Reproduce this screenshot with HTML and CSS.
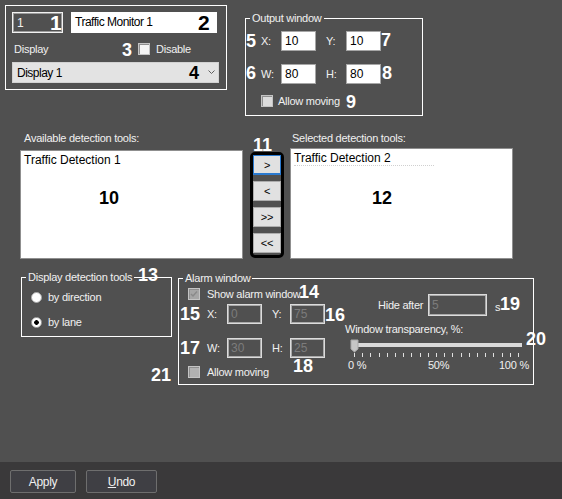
FILE: index.html
```html
<!DOCTYPE html>
<html>
<head>
<meta charset="utf-8">
<link rel="stylesheet" href="styles.css">
</head>
<body>
<div class="window">
  <div class="main">
    <div class="top-row">
      <div class="box general">
        <div class="g-row1">
          <div class="id-field">1</div>
          <div class="name-field">Traffic Monitor 1</div>
        </div>
        <div class="g-row2">
          <span class="display-lbl">Display</span>
          <span class="check light"></span>
          <span class="chk-text">Disable</span>
        </div>
        <div class="combo">
          <span>Display 1</span>
          <svg class="chev" width="7" height="5" viewBox="0 0 7 5"><polyline points="0.5,0.5 3.5,3.5 6.5,0.5" fill="none" stroke="#606060" stroke-width="1"/></svg>
        </div>
      </div>
      <fieldset class="group output">
        <legend>Output window</legend>
        <div class="coord-grid r1">
          <span>X:</span><span class="input">10</span><span></span><span>Y:</span><span class="input">10</span>
        </div>
        <div class="coord-grid r2">
          <span>W:</span><span class="input">80</span><span></span><span>H:</span><span class="input">80</span>
        </div>
        <div class="chk-row">
          <span class="check grey"></span><span>Allow moving</span>
        </div>
      </fieldset>
    </div>

    <div class="lists-row">
      <div class="list-col left">
        <div class="list-label">Available detection tools:</div>
        <div class="listbox"><div class="item">Traffic Detection 1</div></div>
      </div>
      <div class="btn-group">
        <div class="arrow-btn focus">&gt;</div>
        <div class="arrow-btn">&lt;</div>
        <div class="arrow-btn">&gt;&gt;</div>
        <div class="arrow-btn">&lt;&lt;</div>
      </div>
      <div class="list-col right">
        <div class="list-label">Selected detection tools:</div>
        <div class="listbox"><div class="item sel">Traffic Detection 2</div></div>
      </div>
    </div>

    <div class="bottom-row">
      <fieldset class="group detect">
        <legend>Display detection tools</legend>
        <div class="radio-row first"><span class="radio"></span><span>by direction</span></div>
        <div class="radio-row second"><span class="radio on"></span><span>by lane</span></div>
      </fieldset>
      <fieldset class="group alarm">
        <legend>Alarm window</legend>
        <div class="alarm-body">
          <div class="alarm-left">
            <div class="chk-row a1">
              <span class="check dis-checked"><svg width="10" height="10" viewBox="0 0 10 10"><polyline points="2,5 4,7 8,2.5" fill="none" stroke="#8a8a8a" stroke-width="1.5"/></svg></span><span>Show alarm window</span>
            </div>
            <div class="coord-grid a2">
              <span>X:</span><span class="input dis">0</span><span></span><span>Y:</span><span class="input dis">75</span>
            </div>
            <div class="coord-grid a3">
              <span>W:</span><span class="input dis">30</span><span></span><span>H:</span><span class="input dis">25</span>
            </div>
            <div class="chk-row a4">
              <span class="check dis"></span><span>Allow moving</span>
            </div>
          </div>
          <div class="alarm-right">
            <div class="hide-row">
              <span class="hide-lbl">Hide after</span><span class="input dis hide-input">5</span><span class="sec">s</span>
            </div>
            <div class="trans-lbl">Window transparency, %:</div>
            <svg class="slider" width="185" height="22" viewBox="0 0 185 22">
              <rect x="8" y="7" width="169" height="4" fill="#dadada"/>
              <g fill="#e0e0e0">
                <rect x="9" y="17" width="1" height="4"/><rect x="17" y="17" width="1" height="4"/><rect x="25" y="17" width="1" height="4"/>
                <rect x="34" y="17" width="1" height="4"/><rect x="42" y="17" width="1" height="4"/><rect x="50" y="17" width="1" height="4"/>
                <rect x="58" y="17" width="1" height="4"/><rect x="66" y="17" width="1" height="4"/><rect x="75" y="17" width="1" height="4"/>
                <rect x="83" y="17" width="1" height="4"/><rect x="91" y="17" width="1" height="4"/><rect x="99" y="17" width="1" height="4"/>
                <rect x="107" y="17" width="1" height="4"/><rect x="116" y="17" width="1" height="4"/><rect x="124" y="17" width="1" height="4"/>
                <rect x="132" y="17" width="1" height="4"/><rect x="140" y="17" width="1" height="4"/><rect x="148" y="17" width="1" height="4"/>
                <rect x="157" y="17" width="1" height="4"/><rect x="165" y="17" width="1" height="4"/><rect x="173" y="17" width="1" height="4"/>
              </g>
              <polygon points="6,4 13,4 13,13 9.5,16 6,13" fill="#c6c6c6" stroke="#a8a8a8" stroke-width="1"/>
            </svg>
            <div class="slider-labels"><span class="l0">0 %</span><span class="l50">50%</span><span>100 %</span></div>
          </div>
        </div>
      </fieldset>
    </div>
  </div>

  <div class="footer">
    <div class="btn apply">Apply</div>
    <div class="btn undo"><u>U</u>ndo</div>
  </div>

  <span class="num big n1">1</span>
  <span class="num big dark n2">2</span>
  <span class="num n3">3</span>
  <span class="num dark n4">4</span>
  <span class="num n5">5</span>
  <span class="num n6">6</span>
  <span class="num n7">7</span>
  <span class="num n8">8</span>
  <span class="num n9">9</span>
  <span class="num dark n10">10</span>
  <span class="num n11">11</span>
  <span class="num dark n12">12</span>
  <span class="num n13">13</span>
  <span class="num n14">14</span>
  <span class="num n15">15</span>
  <span class="num n16">16</span>
  <span class="num n17">17</span>
  <span class="num n18">18</span>
  <span class="num n19">19</span>
  <span class="num n20">20</span>
  <span class="num n21">21</span>
</div>
</body>
</html>
```

FILE: styles.css
```css
* { box-sizing: border-box; }
html, body { margin: 0; padding: 0; }
body {
  width: 562px;
  height: 499px;
  overflow: hidden;
  background: #505050;
  color: #f0f0f0;
  font-family: "Liberation Sans", Arial, sans-serif;
  font-size: 11px;
  line-height: 14px;
  letter-spacing: -0.25px;
}
.window { position: relative; width: 562px; height: 499px; }
.main { height: 462px; }

/* ---------- top ---------- */
.top-row { display: flex; align-items: flex-start; }
.box { border: 1px solid #ffffff; }
.general {
  margin: 5px 0 0 5px;
  width: 222px;
  height: 85px;
  padding: 6px 0 0 6px;
}
.g-row1 { display: flex; gap: 8px; }
.id-field {
  width: 51px;
  height: 21px;
  border: 1px solid #f2f2f2;
  box-shadow: inset 0 0 0 1px #9c9c9c;
  padding: 3px 4px;
  font-size: 12px;
}
.name-field {
  width: 146px;
  height: 21px;
  background: #ffffff;
  color: #000;
  padding: 3px 4px;
  font-size: 12px;
  letter-spacing: -0.5px;
}
.g-row2 {
  display: flex;
  align-items: center;
  margin-top: 9px;
  height: 14px;
}
.display-lbl { width: 126px; padding-left: 2px; }
.chk-text { margin-left: 6px; }
.combo {
  margin-top: 6px;
  width: 207px;
  height: 21px;
  background: #e3e3e3;
  border: 1px solid #d2d2d2;
  color: #000;
  display: flex;
  align-items: center;
  padding-left: 4px;
  font-size: 12px;
  letter-spacing: -0.5px;
}
.chev { margin-left: auto; margin-right: 3px; }

.check {
  display: inline-block;
  width: 12px;
  height: 12px;
  flex: none;
  border: 1px solid #c4c4c4;
  box-shadow: inset 1px 1px 0 #8e8e8e;
}
.check.light { background: #f4f4f4; }
.check.grey { background: #dcdcdc; }
.check.dis { background: #b2b2b2; }
.check.dis-checked { background: #a6a6a6; }
.check svg { display: block; }

/* fieldsets */
.group {
  margin: 0;
  padding: 0;
  border: 1px solid #ffffff;
  min-width: 0;
}
.group legend {
  padding: 0 2px;
  margin-left: 4px;
  height: 14px;
  line-height: 14px;
}
.output {
  margin: 11px 0 0 18px;
  width: 178px;
  height: 105px;
}
.coord-grid {
  display: grid;
  grid-template-columns: 20px 35px 10px 20px 35px;
  align-items: center;
}
.output .coord-grid { padding-left: 15px; }
.output .r1 { margin-top: 6px; }
.output .r2 { margin-top: 13px; }
.input {
  height: 20px;
  background: #ffffff;
  color: #000;
  border: 1px solid #a6a6a6;
  padding: 2px 3px;
  font-size: 12px;
  line-height: 14px;
  letter-spacing: 0;
}
.input.dis {
  background: transparent;
  color: #7c7c7c;
  border: 1px solid #dcdcdc;
  box-shadow: inset 0 0 0 1px #a9a9a9;
}
.chk-row { display: flex; align-items: center; gap: 5px; height: 14px; }
.output .chk-row { margin-top: 10px; padding-left: 15px; }

/* ---------- lists ---------- */
.lists-row { display: flex; align-items: flex-start; height: 143px; }
.list-col { width: 223px; }
.list-col.left { margin-left: 20px; }
.list-col.right { margin-left: 6px; }
.list-label { margin-top: 15px; padding-left: 4px; height: 14px; }
.right .list-label { padding-left: 2px; }
.listbox {
  background: #ffffff;
  border: 1px solid #8f8f8f;
  color: #000;
  font-size: 12px;
  letter-spacing: 0;
  padding: 2px 3px;
}
.left .listbox { margin-top: 5px; height: 109px; }
.right .listbox { margin-top: 3px; height: 111px; }
.item { line-height: 14px; }
.item.sel { width: 140px; border-bottom: 1px dotted #d0d0d0; }

.btn-group {
  margin: 36px 0 0 7px;
  width: 34px;
  height: 106px;
  border: 3px solid #000;
  border-radius: 5px;
  display: flex;
  flex-direction: column;
  gap: 6px;
}
.arrow-btn {
  height: 20px;
  background: #e1e1e1;
  border: 1px solid #adadad;
  color: #000;
  font-size: 11px;
  display: flex;
  align-items: center;
  justify-content: center;
}
.arrow-btn.focus { border-color: #2a7ad0; border-width: 1px 1px 2px 1px; }

/* ---------- bottom ---------- */
.bottom-row { display: flex; align-items: flex-start; }
.detect {
  margin: 11px 0 0 21px;
  width: 151px;
  height: 67px;
}
.radio-row { display: flex; align-items: center; gap: 6px; padding-left: 9px; height: 14px; }
.radio-row.first { margin-top: 6px; }
.radio-row.second { margin-top: 11px; }
.radio {
  width: 11px;
  height: 11px;
  flex: none;
  border-radius: 50%;
  background: #ffffff;
  border: 1px solid #a9a9a9;
}
.radio.on { background: radial-gradient(circle, #000 0, #000 2px, #ffffff 2.6px); }

.alarm {
  margin: 12px 0 0 6px;
  width: 356px;
  height: 114px;
}
.alarm-body { display: flex; }
.alarm-left { width: 166px; }
.alarm-right { flex: 1; }
.alarm .chk-row { padding-left: 9px; gap: 7px; }
.alarm .a1 { margin-top: 2px; }
.alarm .coord-grid { padding-left: 28px; grid-template-columns: 20px 35px 10px 18px 35px; }
.alarm .a2 { margin-top: 3px; }
.alarm .a3 { margin-top: 14px; }
.alarm .a4 { margin-top: 7px; }

.hide-row { display: flex; align-items: center; margin-top: 9px; padding-left: 33px; }
.hide-lbl { width: 50px; }
.hide-input { width: 59px; height: 22px; padding-top: 3px; }
.sec { margin-left: 8px; margin-top: 3px; }
.trans-lbl { margin-top: 6px; height: 14px; }
.slider { display: block; }
.slider-labels { display: flex; padding-left: 3px; height: 14px; }
.slider-labels .l0 { width: 80px; }
.slider-labels .l50 { width: 71px; }

/* ---------- footer ---------- */
.footer {
  height: 37px;
  background: #3a393a;
  display: flex;
  gap: 10px;
  padding: 8px 0 0 10px;
}
.btn {
  height: 23px;
  border: 1px solid #6e6e6e;
  border-radius: 2px;
  background: #3f3f44;
  color: #f0f0f0;
  display: flex;
  align-items: center;
  justify-content: center;
  font-size: 12px;
  letter-spacing: -0.3px;
}
.btn.apply { width: 66px; }
.btn.undo { width: 71px; }

/* ---------- callout numbers ---------- */
.num {
  position: absolute;
  font-family: "Liberation Sans", Arial, sans-serif;
  font-weight: bold;
  font-size: 18px;
  line-height: 18px;
  letter-spacing: 0;
  color: #ffffff;
}
.num.big { font-size: 21px; line-height: 21px; }
.num.dark { color: #000; }
.n1 { left: 50px; top: 12px; }
.n2 { left: 198px; top: 12px; }
.n3 { left: 122px; top: 41px; }
.n4 { left: 189px; top: 64px; }
.n5 { left: 246px; top: 32px; }
.n6 { left: 246px; top: 64px; }
.n7 { left: 381px; top: 31px; }
.n8 { left: 382px; top: 64px; }
.n9 { left: 346px; top: 93px; }
.n10 { left: 99px; top: 189px; }
.n11 { left: 253px; top: 136px; }
.n12 { left: 372px; top: 189px; }
.n13 { left: 138px; top: 266px; }
.n14 { left: 299px; top: 283px; }
.n15 { left: 180px; top: 305px; }
.n16 { left: 325px; top: 306px; }
.n17 { left: 180px; top: 339px; }
.n18 { left: 293px; top: 357px; }
.n19 { left: 500px; top: 295px; }
.n20 { left: 526px; top: 330px; }
.n21 { left: 151px; top: 366px; }
```
